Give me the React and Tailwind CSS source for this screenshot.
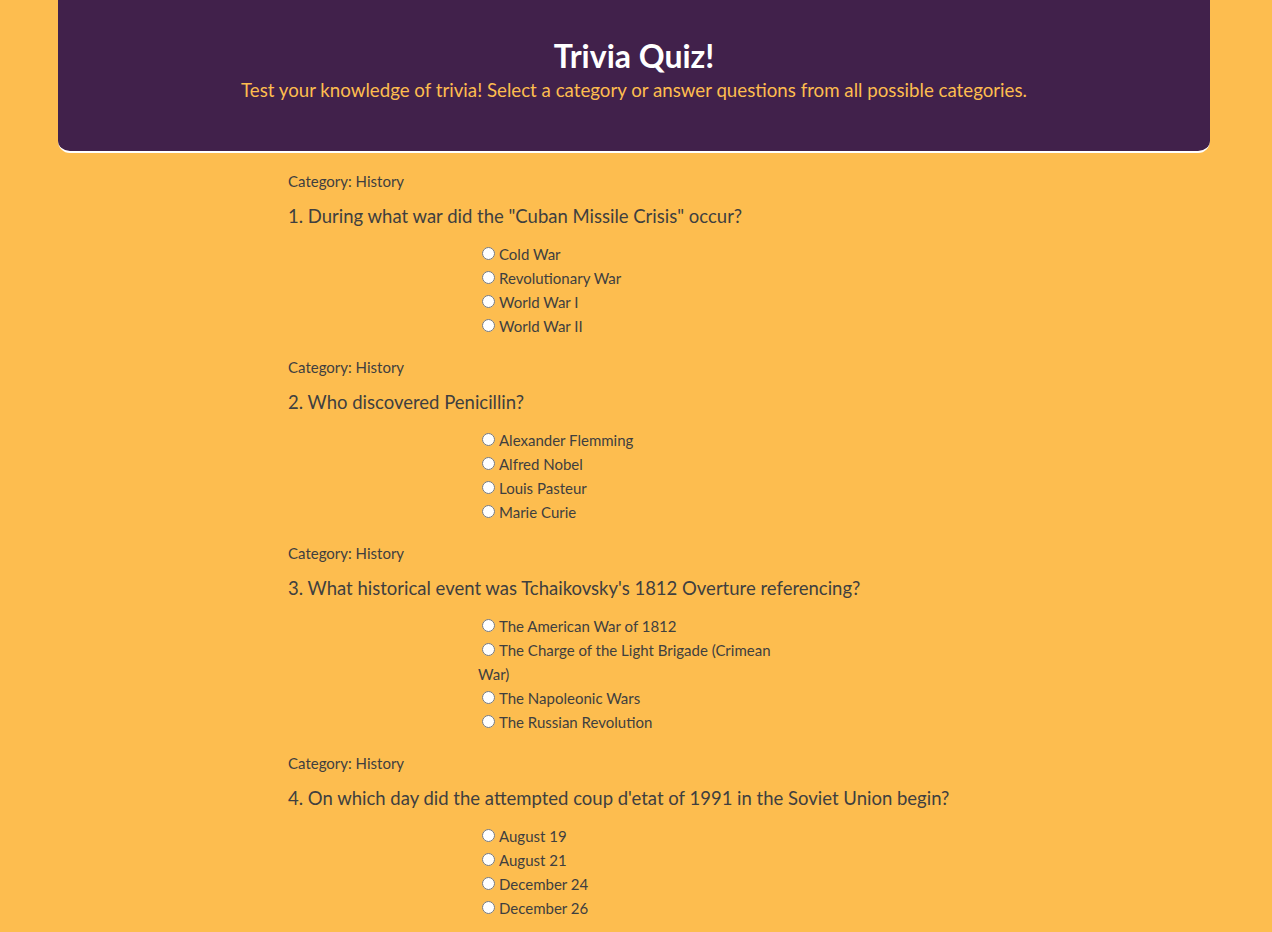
const QUESTIONS = [
  {
    category: 'History',
    text: '1. During what war did the "Cuban Missile Crisis" occur?',
    answers: ['Cold War', 'Revolutionary War', 'World War I', 'World War II'],
  },
  {
    category: 'History',
    text: '2. Who discovered Penicillin?',
    answers: ['Alexander Flemming', 'Alfred Nobel', 'Louis Pasteur', 'Marie Curie'],
  },
  {
    category: 'History',
    text: "3. What historical event was Tchaikovsky's 1812 Overture referencing?",
    answers: [
      'The American War of 1812',
      'The Charge of the Light Brigade (Crimean War)',
      'The Napoleonic Wars',
      'The Russian Revolution',
    ],
  },
  {
    category: 'History',
    text: "4. On which day did the attempted coup d'etat of 1991 in the Soviet Union begin?",
    answers: ['August 19', 'August 21', 'December 24', 'December 26'],
  },
]

function Question({ q, idx }) {
  return (
    <div className="flex flex-col">
      <p className="text-[15px] leading-[22px] mt-[7px]">Category: {q.category}</p>
      <p className="text-[18.5px] leading-[26px] mt-[11px]">{q.text}</p>
      <div className="w-[316px] mx-auto mt-[13px] text-[15px] leading-[24px]">
        {q.answers.map(a => (
          <div key={a}>
            <input type="radio" name={`q${idx}`} className="mt-[3px] mr-[4px] ml-[4px] align-baseline" />
            {a}
          </div>
        ))}
      </div>
    </div>
  )
}

export default function App() {
  return (
    <div
      className="min-h-[932px] bg-[#fdbd4f] text-[#3f3f3f] pb-10"
      style={{ fontFamily: 'Lato, "Open Sans", sans-serif' }}
    >
      {/* Header */}
      <header className="ml-[58px] w-[1152px] h-[153px] bg-[#41214b] rounded-b-xl border-b-2 border-white text-center pt-[36px]">
        <h1 className="text-[32px] leading-[40px] font-bold text-white">Trivia Quiz!</h1>
        <p className="text-[18.7px] leading-[26px] text-[#fdbd4f] mt-[1px]">
          Test your knowledge of trivia! Select a category or answer questions from all possible categories.
        </p>
      </header>

      {/* Questions */}
      <div className="w-[696px] mx-auto mt-[10px] flex flex-col gap-[11px]">
        {QUESTIONS.map((q, i) => (
          <Question key={i} q={q} idx={i} />
        ))}
      </div>
    </div>
  )
}
